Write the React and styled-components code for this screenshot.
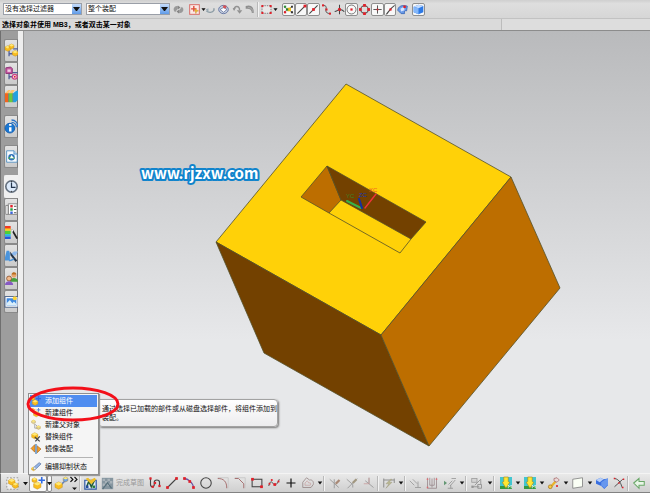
import React from "react";
import styled, { createGlobalStyle } from "styled-components";

const GlobalStyle = createGlobalStyle`
  * { box-sizing: border-box; }
  html, body { margin: 0; padding: 0; overflow: hidden; }
  body, button, select { font-family: "Liberation Sans", "Noto Sans CJK SC", sans-serif; font-size: 7px; color: #111; }
`;

const Window = styled.div`
  display: flex;
  flex-direction: column;
  height: 100vh;
  background: #dcdcdc;
`;

const SelectionBar = styled.header`
  display: flex;
  align-items: center;
  height: 18px;
  padding-left: 3px;
  background: linear-gradient(#cfcfcf, #dedede 20%, #d6d6d6);
`;

const Combo = styled.label`
  position: relative;
  display: block;
  width: ${(p) => p.$width}px;
  height: 12px;
  margin-right: ${(p) => p.$after || 0}px;
`;

const Select = styled.select`
  appearance: none;
  display: block;
  width: 100%;
  height: 12px;
  margin: 0;
  padding: 0 10px 0 1px;
  border: 1px solid #9a9fa8;
  border-radius: 0;
  background: #fff;
  line-height: 10px;
`;

const ComboArrow = styled.svg`
  position: absolute;
  right: 1px;
  top: 1px;
  width: 9px;
  height: 10px;
  background: linear-gradient(#c5dcfb, #5f9be8);
  pointer-events: none;
`;

const Tool = styled.button`
  display: flex;
  flex: none;
  align-items: center;
  justify-content: center;
  width: ${(p) => p.$width}px;
  height: ${(p) => p.$height || 13}px;
  margin: 0;
  padding: 0;
  border: 1px solid ${(p) => (p.$pressed ? "#8f8f8f" : "transparent")};
  border-radius: 2px;
  background: ${(p) => (p.$pressed ? "#f8f8f8" : "none")};
  opacity: ${(p) => (p.$dim ? 0.6 : 1)};
`;

const Glyph = styled.svg`
  display: block;
  flex: none;
  width: ${(p) => p.$size}px;
  height: ${(p) => p.$size}px;
  overflow: visible;
`;

const Spacer = styled.span`
  flex: none;
  width: ${(p) => p.$width}px;
`;

const Divider = styled.span`
  flex: none;
  width: ${(p) => p.$width}px;
  height: 15px;
  background: linear-gradient(90deg, #b9b9b9 1px, #f3f3f3 1px, #f3f3f3 2px, transparent 2px);
`;

const Prompt = styled.div`
  height: 13px;
  padding-left: 2px;
  border-top: 1px solid #c2c2c2;
  border-bottom: 1px solid #8c8c8c;
  background: linear-gradient(90deg, #dadada 501px, #bcbcbc 501px, #bcbcbc 502px, #dddddd 502px);
  color: #000;
  font-weight: 700;
  line-height: 11px;
  white-space: nowrap;
`;

const Body = styled.main`
  display: flex;
  flex: 1;
  min-height: 0;
`;

const ResourceBar = styled.nav`
  display: flex;
  flex: none;
  flex-direction: column;
  width: 18px;
  padding: 8px 0 0 3px;
  border-left: 1px solid #6f6f6f;
  background: #9d9d9d;
`;

const Tab = styled.button`
  display: flex;
  align-items: center;
  justify-content: center;
  width: 100%;
  height: 23px;
  margin: 0 0 ${(p) => p.$after || 0}px;
  padding: 0;
  border: 1px solid ${(p) => (p.$active ? "#f0f0f0" : "#8a8a8a")};
  border-right: ${(p) => (p.$active ? "0" : "1px solid #777")};
  border-radius: 2px 0 0 2px;
  background: ${(p) => (p.$active ? "#f0f0f0" : "linear-gradient(#e2e2e2, #cbcbcb)")};
`;

const Rail = styled.div`
  flex: none;
  width: 6px;
  border-right: 1px solid #9b9b9b;
  background: #eeeeee;
`;

const Viewport = styled.section`
  position: relative;
  flex: 1;
  min-width: 0;
  background: linear-gradient(#b9babc, #e7e8ea 70%);
`;

const Model = styled.svg`
  display: block;
  width: 100%;
  height: 100%;
`;

const Menu = styled.div`
  position: absolute;
  z-index: 2;
  left: 4px;
  bottom: -2px;
  width: 71px;
  padding: 1px;
  border: 1px solid #8f8f8f;
  background: #f5f5f5;
  box-shadow: 1px 1px 1px #999;
`;

const MenuItem = styled.button`
  display: flex;
  align-items: center;
  gap: 4px;
  width: 100%;
  height: 12px;
  margin: 0;
  padding: 0 0 0 1px;
  border: 0;
  background: ${(p) => (p.$selected ? "#4f8df0" : "none")};
  color: ${(p) => (p.$selected ? "#fff" : "#111")};
  line-height: 12px;
  white-space: nowrap;
`;

const MenuRule = styled.hr`
  height: 1px;
  margin: 2px 4px 3px 14px;
  border: 0;
  background: #b4b4b4;
`;

const Tooltip = styled.div`
  position: absolute;
  z-index: 2;
  left: 74px;
  bottom: 46px;
  padding: 4px 0 4px 3px;
  border: 1px solid #a2a2a2;
  border-radius: 0 4px 4px 4px;
  background: linear-gradient(#fff, #ececee);
  box-shadow: 1px 1px 2px #777;
  line-height: 9px;
  white-space: nowrap;
`;

const Highlight = styled.svg`
  position: absolute;
  z-index: 3;
  left: 2px;
  bottom: 51px;
  width: 94px;
  height: 36px;
  pointer-events: none;
`;

const SketchBar = styled.footer`
  display: flex;
  flex: none;
  align-items: center;
  height: 20px;
  padding-left: 2px;
  border-left: 1px solid #777;
  border-top: 1px solid #f4f4f4;
  border-bottom: 1px solid #828282;
  background: linear-gradient(#e9e9e9, #cfcfcf);
`;

const Finish = styled.button`
  flex: none;
  width: 30px;
  padding: 0;
  border: 0;
  background: none;
  color: #999;
  line-height: 12px;
  text-align: left;
  white-space: nowrap;
`;

const INK = "#444";
const RED = "#e0202a";

const Dot = ({ x, y, r = 1.5, c = RED }) => <rect x={x - r} y={y - r} width={r * 2} height={r * 2} fill={c} />;
const Stroke = ({ d, c = INK, w = 1.3 }) => <path d={d} fill="none" stroke={c} strokeWidth={w} />;
const Block = ({ x, y, s = 7, c = "#f9bd20" }) => (
  <g strokeLinejoin="round">
    <path d={`M${x} ${y + s * 0.25}l${s / 2} ${-s * 0.25}l${s / 2} ${s * 0.25}v${s * 0.5}l${-s / 2} ${s * 0.25}l${-s / 2} ${-s * 0.25}z`} fill={c} stroke="#b98212" strokeWidth=".5" />
    <path d={`M${x} ${y + s * 0.25}l${s / 2} ${-s * 0.25}l${s / 2} ${s * 0.25}l${-s / 2} ${s * 0.25}z`} fill="#ffe875" />
  </g>
);

const shapes = {
  arrow: <path d="M5 6h6l-3 4z" fill="#111" />,
  refresh: <><path d="M1 9a5 5 0 0 1 6-6v4l-4 5zM15 7a5 5 0 0 1-6 6V9l4-5z" fill="#999" /><path d="M7 2l4 3-4 3zM9 14l-4-3 4-3z" fill="#858585" /></>,
  pick: <><rect x="1" y="1" width="14" height="14" fill="#fbe9e6" stroke="#d86a66" strokeWidth="1.4" /><Stroke d="M7 3v8M3 7h8" c="#e04a3a" w="2" /><path d="M8 7l6 3-3 1-1 3z" fill="#f4c12d" stroke="#a67415" strokeWidth=".5" /></>,
  back: <><Stroke d="M2 10c3 3 9 3 11-1V6" c="#8a9aa3" w="2" /><path d="M1 8l4-2v6z" fill="#9aabb4" /></>,
  orb: <><ellipse cx="8" cy="8" rx="7" ry="6" fill="#c6cfdf" stroke="#6576a3" strokeWidth="1.4" /><path d="M3 8l5-3 5 3-5 4z" fill="#fff" stroke="#536391" /><path d="M7 2h5v4H8z" fill="#d65356" /></>,
  rotate: <><Stroke d="M3 8c0-6 8-6 8 1" c="#929292" w="2" /><path d="M7 9h8l-4 5zM1 6l5-1-3 5z" fill="#929292" /></>,
  hand: <><path d="M1 3c8-3 12 2 12 10h-3c0-5-4-7-9-6z" fill="#8e8e8e" /><Stroke d="M4 5c5 0 8 3 8 8" c="#bbb" w="1" /></>,
  marquee: <><rect x="1.5" y="2.5" width="13" height="11" fill="#e7e7e7" stroke="#555" strokeDasharray="2 1.5" /><Dot x={2} y={3} /><Dot x={14} y={3} /><Dot x={2} y={13} /><Dot x={14} y={13} /></>,
  snap: <><Stroke d="M1 4l14 9M1 12l13-9" c="#777" w="1" /><Dot x={3} y={4} c="#2f8e37" r={1.6} /><Dot x={9} y={8} c="#efbf18" r={2.6} /><Dot x={13} y={4} c="#333" r={1.4} /><Dot x={3} y={12} c="#e0202a" r={1.6} /><Dot x={6} y={8} c="#267e31" r={1.6} /><Dot x={13} y={12} c="#333" r={1.5} /></>,
  endpoint: <><Stroke d="M2 14L14 2" w="1.6" /><Dot x={13} y={3} r={2} /></>,
  midpoint: <><Stroke d="M2 14L14 2" w="1.6" /><Dot x={8} y={8} r={2} /></>,
  curve: <><Stroke d="M2 2c8 0 5 4 5 7 0 4 3 5 7 5" /><Dot x={3} y={2} /><Dot x={8} y={8} /><Dot x={13} y={14} /></>,
  cross: <><Stroke d="M8 1v14M1 11c3 0 5-3 7-3s4 0 7 3" w="1.5" /><Dot x={8} y={8} r={2} /></>,
  center: <><circle cx="8" cy="8" r="6.5" fill="none" stroke={INK} /><Dot x={8} y={8} r={1.6} /></>,
  quadrant: <><circle cx="8" cy="8" r="5.5" fill="none" stroke={INK} strokeWidth="1.5" /><Dot x={8} y={2} r={2} /><Dot x={8} y={14} r={2} /><Dot x={2} y={8} r={2} /><Dot x={14} y={8} r={2} /></>,
  plusPoint: <><Stroke d="M8 2v12M2 8h12" /><Dot x={8} y={8} r={1.2} /></>,
  pointCurve: <><Stroke d="M2 15C5 12 8 6 14 2" w="1.6" /><Dot x={8} y={8} r={1.6} /></>,
  pointFace: <><path d="M1 9C2 3 7 1 15 3l-1 7c-2-1-4 0-3 4H6z" fill="#6b9be8" stroke="#2859af" /><path d="M5 7l5-3 1 5-5 2z" fill="#d9e6ff" /><Dot x={11} y={4} r={1.8} /></>,
  blueBox: <><path d="M1 4l7-3 7 2v9l-7 3-7-3z" fill="#2d79e5" /><path d="M1 4l7-3 7 2-7 3z" fill="#c4ddff" /><path d="M1 4l7 2v9l-7-3z" fill="#83b7fa" /></>,
  assembly: <><Stroke d="M5 8v7M5 12h5M10 6h6" c="#526098" w="1.6" /><Block x={0} y={2} s={7} /><Block x={5} y={0} s={6} /><Block x={9} y={8} s={7} /></>,
  constraint: <><Stroke d="M5 8v7M5 12h5M9 7h7" c="#526098" w="1.6" /><path d="M1 1l6-1 2 2v6H1z" fill="#c3589f" stroke="#82266c" /><path d="M3 3h4v3H3z" fill="#f2cde3" /><circle cx="12" cy="12" r="3" fill="#f4dbe9" stroke="#cb4486" strokeWidth="1.5" /><Dot x={12} y={12} r={1} /></>,
  books: <><path d="M0 4l4-2v13H0z" fill="#f2641d" /><path d="M5 4l4-3v14H5z" fill="#6bca3b" /><path d="M10 4l4-3h2v11l-3 3h-3z" fill="#24a0df" /><path d="M0 4l4-4h3L4 4zM5 4l3-4h4L9 4z" fill="#ffc36b" /><path d="M4.5 4v11M9.5 4v11" stroke="#246b3a" strokeWidth=".8" /></>,
  web: <><circle cx="6" cy="10" r="6" fill="#1877d3" stroke="#1157a7" /><path d="M5 9h3v5H5zM5 5h3v2H5z" fill="#fff" /><Stroke d="M8 3c4 0 6 3 6 6M8 0c5 0 8 4 8 9" c="#2d76c8" w="1.6" /></>,
  history: <><path d="M2 1h9l4 4v10H2z" fill="#f8fbff" stroke="#4386bd" /><path d="M11 1v4h4" fill="#c2dcf3" stroke="#4386bd" /><circle cx="8" cy="9" r="4" fill="#2f72bb" /><path d="M4 11c1-5 7-4 8 0l-4-1z" fill="#47a846" /><path d="M8 6l3 4H6z" fill="#fff" /></>,
  clock: <><circle cx="8" cy="8" r="7" fill="#dceafb" stroke="#65717f" strokeWidth="2" /><Stroke d="M8 3v6h5" c="#23354c" w="1.5" /><Dot x={8} y={2} r={0.6} c="#333" /><Dot x={8} y={14} r={0.6} c="#333" /></>,
  list: <><path d="M1 3h3v11H1zM4 1h11v13H4z" fill="#fff" stroke="#777" /><Dot x={8} y={4} r={1.5} /><Dot x={8} y={8} r={1.5} c="#259d42" /><Dot x={8} y={12} r={1.5} c="#3b65d7" /><Stroke d="M11 4h3M11 8h3M11 12h3" c="#555" /></>,
  spectrum: <><path d="M0 0h7v4H0z" fill="#f13922" /><path d="M0 3h7v3H0z" fill="#fbcb22" /><path d="M0 6h7v4H0z" fill="#50cf38" /><path d="M0 10h7v3H0z" fill="#27bbe0" /><path d="M0 13h7v3H0z" fill="#2854db" /><path d="M7 4l3 1 6 10-2 1z" fill="#222" /><path d="M7 4l3 1-1 3z" fill="#fff" /></>,
  brush: <><path d="M2 2h3l1 3v9H0v-4z" fill="#4a94dc" /><path d="M6 7l5-4h5l-3 5H7z" fill="#8eb9ed" /><path d="M6 3l9 11-2 2-6-8z" fill="#223246" /><path d="M5 14c3 1 4-2 6-1" stroke="#4a94dc" strokeWidth="2" fill="none" /></>,
  people: <><circle cx="11" cy="4" r="3" fill="#e8a66c" /><path d="M6 12c0-6 10-6 10 0z" fill="#46a03c" /><circle cx="5" cy="8" r="3" fill="#f1ba8d" stroke="#8b502b" /><path d="M0 16c0-6 10-6 10 0z" fill="#875ac3" /><path d="M8 3c1-4 6-3 6 0" fill="#b96d20" /></>,
  photo: <><rect x="0" y="2" width="16" height="13" fill="#fff" stroke="#344f7b" /><path d="M2 4h12v9H2z" fill="#408ae0" /><path d="M2 10l4-4 3 4 2-2 3 3v2H2z" fill="#daeef9" /><circle cx="12" cy="4" r="2.5" fill="#ffd537" /></>,
  addPart: <><Block x={2} y={6} s={9} /><Block x={0} y={1} s={6} /><Stroke d="M12 0v8M8 4h8" c="#336be0" w="2" /></>,
  newPart: <><Block x={4} y={5} s={9} /><Stroke d="M3 0v7M0 3h7" c="#f59b23" w="2" /><Stroke d="M12 0v6M9 3h6" c="#5a83d4" w="1.5" /></>,
  parent: <><Block x={1} y={0} s={6} c="#ddd49e" /><Stroke d="M6 6v7h5M7 7l5 5" c="#999" /><Block x={9} y={9} s={6} c="#d9ce91" /></>,
  replace: <><Block x={1} y={1} s={10} /><Stroke d="M6 8l8 7M14 7l-7 8" c="#444" w="2" /></>,
  mirror: <><path d="M6 1L0 7l6 6zM10 3l6 5-6 6z" fill="#f29d25" stroke="#a86015" /><Stroke d="M8 0v16" c="#427fbd" w="2" /></>,
  edit: <><Block x={1} y={8} s={6} /><path d="M4 12l1-4 8-7 3 2-8 8z" fill="#94b5e5" stroke="#4b679b" /><path d="M4 12l1-4 3 3z" fill="#eee" /></>,
  cluster: <><rect x="1" y="1" width="14" height="14" fill="#eee" stroke="#888" strokeDasharray="2 2" /><Block x={3} y={2} s={8} /><Block x={8} y={7} s={7} /></>,
  link: <><Stroke d="M4 13L13 4" c="#6482bd" w="2" /><Block x={0} y={6} s={9} /><Block x={10} y={0} s={6} c="#69a2ef" /></>,
  more: <g><Stroke d="M3 0l3 3-3 3M8 0l3 3-3 3" c="#111" w="1.5" /><path d="M5 13h6l-3 3z" fill="#111" /></g>,
  sketch: <><path d="M1 4h14v11H1z" fill="#e8eef8" stroke="#315ba5" strokeWidth="1.5" /><Stroke d="M3 13l3-8 3 7 4-8" c="#245b39" w="2" /><path d="M2 2l3-1 3 3 5-3 2 2-6 6z" fill="#efbe29" /><Dot x={4} y={12} c="#234ba1" /><Dot x={12} y={12} c="#247b38" /></>,
  flag: <><path d="M1 1h14v14H1z" fill="#8696a0" /><path d="M2 2h3v3H2zM8 2h3v3H8zM5 5h3v3H5zM11 5h3v3h-3zM2 8h3v3H2zM8 8h3v3H8z" fill="#a9b3b9" /><Stroke d="M2 15l6-8 5 7" c="#58707c" w="1.5" /></>,
  profile: <><Stroke d="M2 1v9c0 4 5 4 5 0V7c0-4 7-4 7 0v5" w="1.5" /><Dot x={2} y={2} /><Dot x={5} y={13} /><Dot x={8} y={8} /><Dot x={14} y={12} /></>,
  line: <><Stroke d="M1 15L15 1" w="1.5" /><Dot x={2} y={14} r={1.8} /><Dot x={14} y={2} r={1.8} /></>,
  arc: <><Stroke d="M1 2C7 2 14 8 14 15" c="#6b50a0" w="1.7" /><Dot x={2} y={2} r={1.8} /><Dot x={9} y={6} r={1.8} /><Dot x={14} y={14} r={1.8} /></>,
  circle: <circle cx="8" cy="8" r="7" fill="none" stroke="#444" strokeWidth="1.4" />,
  fillet: <><Stroke d="M1 1h14v14" c="#c8c8c8" /><Stroke d="M1 2c8 0 12 4 12 13" c="#a66f6f" /></>,
  chamfer: <><Stroke d="M1 1h14v14" c="#c8c8c8" /><Stroke d="M1 2h5l7 7v6" c="#a66f6f" /></>,
  rectangle: <><rect x="1.5" y="3" width="13" height="10" fill="none" stroke="#444" strokeWidth="1.4" /><Dot x={2} y={3} r={1.8} /><Dot x={14} y={13} r={1.8} /></>,
  spline: <><Stroke d="M1 12c2-8 4-6 6-3s5 2 8-6" w="1.2" /><Dot x={2} y={9} r={1.2} /><Dot x={5} y={4} r={1.2} /><Dot x={9} y={10} r={1.8} /><Dot x={14} y={6} r={1.2} /></>,
  plus: <Stroke d="M8 2v12M2 8h12" c="#111" w="1.6" />,
  offset: <><path d="M1 7l5-6 4 3c4-1 6 3 5 6l-3 4H1z" fill="none" stroke="#7e6767" strokeWidth="1.3" /><path d="M4 8l3-3 2 3c3-1 3 1 2 3H4z" fill="none" stroke="#bd8181" /></>,
  trim: <><Stroke d="M1 3l12 11M7 3v12" c="#666" w="1.1" /><Stroke d="M9 9l5-5" c="#875232" w="3" /></>,
  extend: <><Stroke d="M1 3l8 7v4M2 15L15 2" c="#666" w="1.1" /><Stroke d="M9 8l5-5" c="#7a6943" w="3" /></>,
  corner: <><Stroke d="M8 1v8l6 5M3 5l5 4" c="#666" w="1.1" /><Stroke d="M1 9h7V1" c="#ba6e6e" w="1" /></>,
  dimension: <><Stroke d="M1 2v12M15 2v6M1 4h14" c="#555" w="1.3" /><path d="M10 3l-6 6h4l-4 6 8-8H8l4-4z" fill="#a7a65b" stroke="#716943" strokeWidth=".6" /></>,
  parallel: <Stroke d="M1 5l6 6M5 3l6 6M8 14h8M12 6v8" c="#777" w="1.2" />,
  autoConstraint: <><Stroke d="M2 1v14h12V1M5 1v10h6V1M8 2v12" c="#775f65" w="1.2" /><Dot x={2} y={3} r={1} /><Dot x={14} y={3} r={1} /><Dot x={2} y={14} r={1} /></>,
  showConstraint: <><path d="M0 5l4 3-4 3z" fill="#156b30" /><Stroke d="M6 10l5-5M8 12l7-8M5 15h7M9 11v4M10 2h6" c="#666" w="1.1" /></>,
  convert: <><rect x="1" y="2" width="7" height="5" fill="#ccc" stroke="#666" /><Stroke d="M2 13h9M5 11l8-8M13 3v7M9 10h5v5H9z" c="#666" w="1.2" /><Dot x={2} y={13} c="#666" /></>,
  tealDown: <><rect width="16" height="16" fill="#42c5d0" /><path d="M0 12h16v4H0z" fill="#339941" /><path d="M5 0h6v6l2 1-5 8-5-8 2-1z" fill="#ffe633" stroke="#9e871c" strokeWidth=".8" /><Stroke d="M11 15v-4l2 2 2-2v4" c="#fff" w="1" /></>,
  key: <><Stroke d="M3 14l7-8" c="#e9b32b" w="3" /><circle cx="3" cy="13" r="2.5" fill="#f8ca43" stroke="#a37426" /><path d="M8 2l4-1 3 3-3 3-4-2z" fill="#ead9d9" stroke="#a66767" /><Dot x={12} y={12} r={1.2} /></>,
  plane: <path d="M1 3l13-2v12L1 15z" fill="#fafff5" stroke="#777" />,
  solid: <><path d="M0 4l6-3 4 2 6-1v9l-5 5-4-4-7-3z" fill="#396fe0" /><path d="M0 4l6-3 4 2-5 4z" fill="#b7cff8" /><path d="M7 7l6-4 3-1v8l-5 5-4-4z" fill="#6797ee" /></>,
  axes: <><Stroke d="M2 2c7 1 9 8 10 12M2 13L13 3" c="#444" w="1.2" /><Dot x={2} y={2} r={1} /><Dot x={8} y={8} r={1} /><Dot x={14} y={3} r={1} /><Dot x={13} y={14} r={1} /></>,
  leave: <path d="M1 8l7-6v4h7v5H8v4z" fill="#e9f6e7" stroke="#69a768" strokeWidth="1.4" />,
};

const Icon = ({ name, size }) => (
  <Glyph $size={size} viewBox="0 0 16 16" aria-hidden="true">{shapes[name]}</Glyph>
);

const topTools = [
  ["refresh", 17, "更新"], ["pick", 14, "选择意图"], ["arrow", 4, "选择选项"], ["back", 11, "返回"], ["orb", 15, "视图"],
  ["rotate", 13, "旋转"], ["hand", 13, "平移"], ["|", 3], ["marquee", 12, "框选"], ["arrow", 7, "框选选项"], ["_", 3],
  ["snap", 13, "启用捕捉点", 1], ["endpoint", 12, "端点", 1], ["midpoint", 13, "中点", 1], ["curve", 13, "控制点"],
  ["cross", 12, "交点"], ["center", 13, "圆弧中心", 1], ["quadrant", 13, "象限点"], ["plusPoint", 13, "现有点", 1],
  ["pointCurve", 12, "曲线上的点", 1], ["pointFace", 13, "面上的点"], ["_", 3], ["blueBox", 13, "着色", 1],
];

const tabs = [
  ["assembly", "装配导航器"], ["constraint", "约束导航器"], ["books", "重用库", 7], ["web", "网页", 7], ["history", "文档", 7],
  ["clock", "历史记录"], ["list", "部件列表"], ["spectrum", "材料"], ["brush", "样式"], ["people", "角色"], ["photo", "场景"],
];

const menuItems = [
  ["addPart", "添加组件"], ["newPart", "新建组件"], ["parent", "新建父对象"], ["replace", "替换组件"], ["mirror", "镜像装配"],
];

const leftTools = [
  ["cluster", 18, "装配"], ["arrow", 8, "装配选项"], ["addPart", 18, "组件", 1], ["arrow", 5, "组件选项", 1], ["link", 18, "关联"],
  ["more", 9, "更多"], ["|", 3], ["sketch", 17, "草图"], ["flag", 17, "完成"],
];

const rightTools = [
  ["profile", 17, "轮廓"], ["line", 17, "直线"], ["arc", 17, "圆弧"], ["circle", 17, "圆"], ["fillet", 17, "圆角"],
  ["chamfer", 17, "倒斜角"], ["rectangle", 17, "矩形"], ["spline", 17, "样条"], ["plus", 17, "点"],
  ["offset", 18, "偏置曲线", 0, 1], ["arrow", 6, "偏置选项"], ["|", 3], ["trim", 17, "快速修剪", 0, 1],
  ["extend", 17, "快速延伸", 0, 1], ["corner", 17, "制作拐角", 0, 1], ["|", 3], ["dimension", 18, "自动尺寸", 0, 1],
  ["arrow", 6, "尺寸选项"], ["|", 3], ["parallel", 16, "约束", 0, 1], ["autoConstraint", 18, "自动约束", 0, 1],
  ["showConstraint", 18, "显示约束", 0, 1], ["arrow", 6, "约束选项"], ["|", 3], ["convert", 18, "转换", 0, 1],
  ["arrow", 7, "转换选项"], ["|", 4], ["tealDown", 18, "向下移动"], ["arrow", 6, "移动选项"], ["tealDown", 18, "向下复制"],
  ["arrow", 6, "复制选项"], ["key", 18, "工具"], ["arrow", 6, "工具选项"], ["plane", 18, "基准平面"], ["arrow", 6, "平面选项"],
  ["solid", 17, "实体"], ["axes", 17, "坐标系"], ["|", 4], ["leave", 16, "退出"],
];

const ToolRun = ({ tools, size, height }) =>
  tools.map(([name, width, label, pressed, dim], i) => {
    if (name === "_") return <Spacer key={i} $width={width} />;
    if (name === "|") return <Divider key={i} $width={width} />;
    return (
      <Tool key={i} type="button" aria-label={label} $width={width} $height={height} $pressed={pressed} $dim={dim}>
        <Icon name={name} size={size} />
      </Tool>
    );
  });

const Filter = ({ label, value, width, after }) => (
  <Combo $width={width} $after={after}>
    <Select aria-label={label} defaultValue={value}><option>{value}</option></Select>
    <ComboArrow viewBox="0 0 9 10" aria-hidden="true"><path d="M1 3h7L5 7H4z" fill="#111" /></ComboArrow>
  </Combo>
);

const Scene = () => (
  <Model viewBox="24 31 626 442" role="img" aria-label="实体模型">
    <g stroke="#54502a" strokeWidth="0.8" strokeLinejoin="round">
      <path d="M346 84L511 177L381 335L216 242Z" fill="#ffd108" />
      <path d="M216 242L381 335L429 446L264 353Z" fill="#734100" />
      <path d="M511 177L560 288L429 446L381 335Z" fill="#bd6e00" />
      <path d="M327 166L341 200L329 213L301 197Z" fill="#bd6e00" />
      <path d="M327 166L426 222L411 239L341 200Z" fill="#734100" />
      <path d="M329 213L400 253L411 239" fill="none" />
    </g>
    <g fill="none" strokeLinecap="round">
      <path d="M365 208L376 194" stroke="#ec3438" strokeWidth="1.4" />
      <path d="M361 208L347 201" stroke="#37b34b" strokeWidth="2" />
      <path d="M362 208L359 199" stroke="#15309c" strokeWidth="2.2" />
    </g>
    <g fontFamily="Liberation Sans, sans-serif" fontSize="6">
      <text x="369" y="192" fill="#ef5a20">XC</text>
      <text x="359" y="197" fill="#1736b4">ZC</text>
      <text x="346" y="198" fill="#3b8424">YC</text>
    </g>
    <text x="141" y="179" fontFamily="Noto Sans CJK SC, sans-serif" fontWeight="700" fontSize="15" fill="#fff" stroke="#1184cc" strokeWidth="4" strokeLinejoin="round" paintOrder="stroke">www.rjzxw.com</text>
  </Model>
);

export default function App() {
  return (
    <Window lang="zh-CN">
      <GlobalStyle />
      <SelectionBar>
        <Filter label="选择过滤器" value="没有选择过滤器" width={79} after={4} />
        <Filter label="选择范围" value="整个装配" width={84} />
        <ToolRun tools={topTools} size={11} height={13} />
      </SelectionBar>
      <Prompt>选择对象并使用 MB3，或者双击某一对象</Prompt>
      <Body>
        <ResourceBar>
          {tabs.map(([name, label, after]) => (
            <Tab key={name} type="button" aria-label={label} $after={after} $active={name === "clock"}>
              <Icon name={name} size={13} />
            </Tab>
          ))}
        </ResourceBar>
        <Rail />
        <Viewport>
          <Scene />
          <Tooltip role="tooltip">
            通过选择已加载的部件或从磁盘选择部件，将组件添加到
            <br />
            装配。
          </Tooltip>
          <Menu role="menu">
            {menuItems.map(([icon, text], i) => (
              <MenuItem key={text} type="button" role="menuitem" $selected={i === 0}>
                <Icon name={icon} size={10} />{text}
              </MenuItem>
            ))}
            <MenuRule />
            <MenuItem type="button" role="menuitem"><Icon name="edit" size={10} />编辑抑制状态</MenuItem>
          </Menu>
          <Highlight viewBox="0 0 94 36" aria-hidden="true">
            <ellipse cx="47" cy="18" rx="45" ry="16" fill="none" stroke="#f3101a" strokeWidth="3" />
          </Highlight>
        </Viewport>
      </Body>
      <SketchBar>
        <ToolRun tools={leftTools} size={13} height={17} />
        <Finish type="button" disabled>完成草图</Finish>
        <ToolRun tools={rightTools} size={12} height={17} />
      </SketchBar>
    </Window>
  );
}
